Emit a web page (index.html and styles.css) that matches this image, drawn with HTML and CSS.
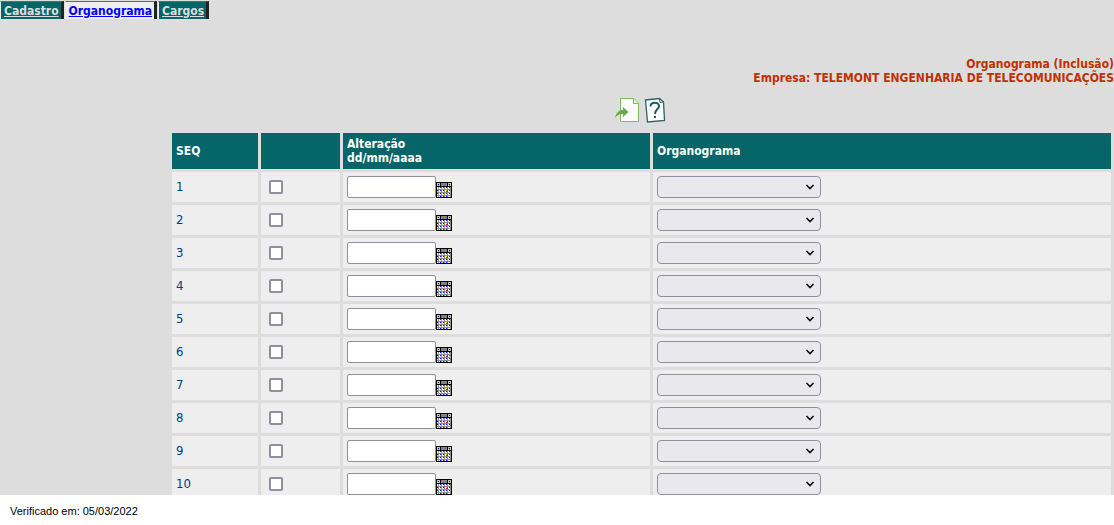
FILE: index.html
```
<!DOCTYPE html>
<html lang="pt-BR">
<head>
<meta charset="utf-8">
<title>Organograma (Inclusão)</title>
<link rel="stylesheet" href="styles.css">
</head>
<body>
<svg class="sprites" aria-hidden="true">
  <symbol id="calendar" viewBox="0 0 16 16">
    <path fill="#000" d="M0 0h16v16H0z"/>
    <path fill="#c0c0c0" d="M1 1h3v3H1zM12 1h3v3h-3z"/>
    <path fill="#808080" d="M5 1h6v3H5z"/>
    <path fill="#000" d="M2 2h1v1H2zM13 2h1v1h-1z"/>
    <path fill="#909090" d="M1 5h14v10H1z"/>
    <path fill="#fff" d="M1 5h1v2H1zM3 5h2v2H3zM6 5h2v2H6zM9 5h2v2H9zM12 5h2v2h-2zM1 8h1v2H1zM3 8h2v2H3zM6 8h2v2H6zM9 8h2v2H9zM12 8h2v2h-2zM1 11h1v2H1zM3 11h2v2H3zM6 11h2v2H6zM9 11h2v2H9zM12 11h2v2h-2zM1 14h1v1H1zM3 14h2v1H3zM6 14h2v1H6zM9 14h2v1H9zM12 14h2v1h-2z"/>
    <path fill="#00f" d="M4 5h1v1H4zM7 5h1v1H7zM10 5h1v1h-1zM13 5h1v1h-1zM1 8h1v1H1zM4 8h1v1H4zM7 8h1v1H7zM13 8h1v1h-1zM1 11h1v1H1zM4 11h1v1H4zM7 11h1v1H7zM10 11h1v1h-1zM13 11h1v1h-1zM4 14h1v1H4zM7 14h1v1H7zM10 14h1v1h-1z"/>
    <path fill="#f00" d="M10 8h2v2h-2z"/>
    <path class="spark" d="M10 8h1v1h-1z"/>
  </symbol>
</svg>
<main class="content">
  <nav class="tabs">
    <a class="tab" href="#cadastro">Cadastro</a>
    <a class="tab tab-active" href="#organograma">Organograma</a>
    <a class="tab" href="#cargos">Cargos</a>
  </nav>
  <h1 class="heading">Organograma (Inclusão)<br>Empresa: TELEMONT ENGENHARIA DE TELECOMUNICAÇÕES</h1>
  <div class="panel">
    <div class="toolbar">
      <button class="tool" type="button" aria-label="Voltar">
        <svg width="26" height="26" viewBox="0 0 26 26"><path d="M6.500 1.500H20L24.500 6V24.500H6.500z" fill="#fff" stroke="#7dbb5b"/><path d="M19.500 1.500V6.500H24.500" fill="#e4f0dc" stroke="#7dbb5b"/><path d="M1 21C2 15 6 13 9 13V10L14.500 15L9 20V17C6 16.500 3 18 1 21z" fill="#64ab49"/></svg>
      </button>
      <button class="tool" type="button" aria-label="Ajuda">
        <svg width="22" height="26" viewBox="0 0 22 26"><path d="M1.500 3L15.500 1.500L19.500 5L20.500 23.500L3.500 25z" fill="#fff" stroke="#2b6366" stroke-width="1.300"/><path d="M15.500 1.500L16 5.500L19.500 5" fill="none" stroke="#2b6366"/><path d="M6.500 9.500C6.500 4.500 15 4.500 15 9C15 12.500 11 12 11 17" fill="none" stroke="#1d5a5e" stroke-width="2"/><path d="M10 19h2v2h-2z" fill="#1d5a5e"/></svg>
      </button>
    </div>
    <table class="grid">
      <colgroup><col class="col-seq"><col class="col-check"><col class="col-date"><col></colgroup>
      <thead>
        <tr><th>SEQ</th><th></th><th>Alteração<br>dd/mm/aaaa</th><th>Organograma</th></tr>
      </thead>
      <tbody id="rows"></tbody>
    </table>
  </div>
</main>
<footer class="footer">Verificado em: 05/03/2022</footer>
<script src="rows.js"></script>
</body>
</html>
```
FILE: rows.js
```
const body = document.getElementById('rows');
for (let n = 1; n <= 10; n++) {
  body.insertAdjacentHTML('beforeend', `
    <tr>
      <td class="seq">${n}</td>
      <td><input class="check" type="checkbox" aria-label="Selecionar ${n}"></td>
      <td><div class="date"><input class="date-input" type="text" aria-label="Alteração ${n}"><button class="date-button" type="button" aria-label="Calendário ${n}"><svg width="16" height="16" shape-rendering="crispEdges"><use href="#calendar"/></svg></button></div></td>
      <td><div class="picker"><select class="select" aria-label="Organograma ${n}"><option></option></select><svg class="chevron" width="10" height="6" viewBox="0 0 10 6"><path d="M1.500 1L5 4.500L8.500 1"/></svg></div></td>
    </tr>`);
}
```
FILE: styles.css
```
* { box-sizing: border-box; }
body {
  margin: 0;
  height: 100vh;
  display: flex;
  flex-direction: column;
  background: #fff;
  font: 12px/14px Tahoma, "DejaVu Sans Condensed", "DejaVu Sans", sans-serif;
}
.sprites { display: none; }
.content {
  flex: 1;
  min-height: 0;
  overflow: hidden;
  background: #ddd;
}
.tabs { display: flex; gap: 1px; padding-top: 1px; }
.tab {
  padding: 2px 2px 0 3px;
  border: solid #ddd;
  border-color: #666 #222 #ddd #eee;
  border-width: 1px 3px 0 1px;
  background: #056568;
  color: #ddd;
  font-weight: bold;
  line-height: 15px;
}
.tab-active { background: #eee; color: #00f; }
.heading {
  margin: 38px 0 0;
  color: #c03000;
  font-size: 12px;
  line-height: 14px;
  text-align: right;
}
.panel { margin: 12px 0 0 169px; }
.toolbar {
  display: flex;
  justify-content: center;
  gap: 4px;
  height: 33px;
  padding-right: 3px;
}
.tool, .date-button {
  display: block;
  padding: 0;
  border: 0;
  background: none;
}
.tool { height: 26px; }
.tool svg, .date-button svg { display: block; }
.grid {
  width: 100%;
  table-layout: fixed;
  border-spacing: 3px;
}
.col-seq { width: 86px; }
.col-check { width: 79px; }
.col-date { width: 307px; }
.grid th {
  padding: 4px;
  background: #056568;
  color: #fff;
  text-align: left;
}
.grid td {
  padding: 4px;
  background: #eee;
  color: #003c82;
}
.grid .seq { font-size: 13px; line-height: 16px; }
.check, .date-input, .select {
  appearance: none;
  border: 1px solid #8f8f9d;
  background: #fff;
}
.check {
  display: block;
  width: 14px;
  height: 14px;
  margin: 0 4px;
  border-width: 2px;
  border-radius: 2px;
}
.date { display: flex; align-items: flex-end; }
.date-input { width: 89px; height: 22px; border-radius: 2px; }
.picker { display: grid; width: 164px; align-items: center; }
.select {
  grid-area: 1 / 1;
  height: 22px;
  border-radius: 4px;
  background: #e9e9ed;
}
.chevron {
  grid-area: 1 / 1;
  justify-self: end;
  margin-right: 6px;
  fill: none;
  stroke: #111;
  stroke-width: 1.600;
  pointer-events: none;
}
.spark { fill: #ff0; }
.footer {
  height: 30px;
  padding: 9px 10px 0;
  color: #000;
  font: 11px/14px "Liberation Sans", sans-serif;
}
```
